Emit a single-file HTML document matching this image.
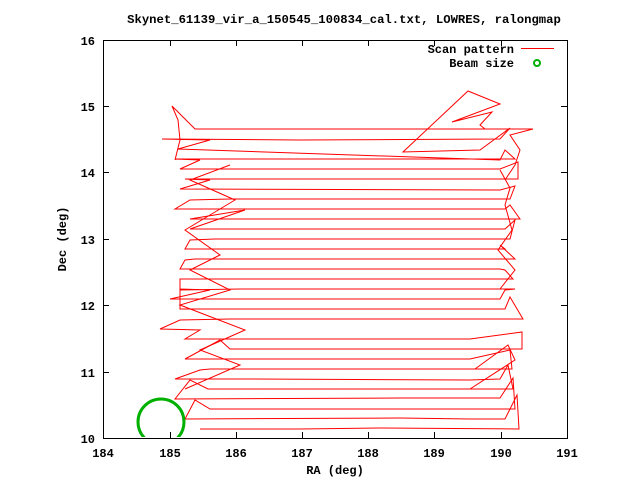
<!DOCTYPE html>
<html><head><style>
html,body{margin:0;padding:0;background:#fff;}
svg{display:block;}
text{font-family:"Liberation Mono","DejaVu Sans Mono",monospace;font-weight:bold;font-size:12px;fill:#000;}
</style></head><body>
<svg width="640" height="480" viewBox="0 0 640 480" xmlns="http://www.w3.org/2000/svg">
<rect width="640" height="480" fill="#fff"/>
<text x="344" y="23" text-anchor="middle" style="font-size:12.25px">Skynet_61139_vir_a_150545_100834_cal.txt, LOWRES, ralongmap</text>
<defs><clipPath id="c"><rect x="103" y="40" width="464" height="397"/></clipPath></defs>
<g stroke="#000" stroke-width="1" fill="none" shape-rendering="crispEdges">
<rect x="103.5" y="40.5" width="464" height="398"/>
<path d="M170.5 438v-6M236.5 438v-6M302.5 438v-6M368.5 438v-6M434.5 438v-6M501.5 438v-6M170.5 40v6M236.5 40v6M302.5 40v6M368.5 40v6M434.5 40v6M501.5 40v6
M103 372.5h6M103 305.5h6M103 239.5h6M103 172.5h6M103 106.5h6M567 372.5h-6M567 305.5h-6M567 239.5h-6M567 172.5h-6M567 106.5h-6"/>
</g>
<g text-anchor="end">
<text x="95" y="443">10</text><text x="95" y="377">11</text><text x="95" y="310">12</text><text x="95" y="244">13</text><text x="95" y="177">14</text><text x="95" y="111">15</text><text x="95" y="45">16</text>
</g>
<g text-anchor="middle">
<text x="103" y="457">184</text><text x="170" y="457">185</text><text x="236" y="457">186</text><text x="302" y="457">187</text><text x="368" y="457">188</text><text x="434" y="457">189</text><text x="501" y="457">190</text><text x="567" y="457">191</text>
<text x="335" y="474">RA (deg)</text>
<text transform="translate(66,239) rotate(-90)">Dec (deg)</text>
</g>
<g clip-path="url(#c)">
<polyline fill="none" stroke="#f00" stroke-width="1" points="
200,429 300,429 380,428 519,429 517,395 505,419 470,419 400,418 185,419 195,400 210,409 515,409 513,378 500,398 460,398 400,398 175,399 190,380 208,389 513,389 508,365 500,379 470,380 250,379 175,379 200,370 210,369 512,369 510,350 470,359 185,359 220,340 230,349 522,349 522,332 470,339 185,339 200,330 160,329 180,320 230,319 523,319 510,297 505,309 180,309 180,290 240,289 515,289 505,290 500,299 170,299 210,290 180,289 180,279 200,279 513,279 505,270 500,269 180,269 185,260 195,259 515,259 500,245 505,249 185,249 190,240 215,239 510,239 515,220 505,229 190,229 245,210 190,219 520,219 510,205 505,209 175,209 190,200 230,199 510,199 515,186 500,190 180,189 210,180 185,179 518,179 518,162 500,169 180,169 200,160 175,159 515,159 505,150 500,160 178,149 210,140 162,139 300,140 500,139 510,128 480,150 403,152 468,91 500,104 452,122 492,112 480,125 485,129 195,129 172,106 178,120 180,140 175,160
"/>
<polyline fill="none" stroke="#f00" stroke-width="1" points="505,180 515,165 520,150 510,135 533,129 195,129"/>
<polyline fill="none" stroke="#f00" stroke-width="1" points="470,389 515,360 508,345 475,369"/>
<polyline fill="none" stroke="#f00" stroke-width="1" points="185,389 240,365 200,350 245,330 180,305 230,290 190,270 220,255 185,230 235,200 190,180 230,165"/>
<polyline fill="none" stroke="#f00" stroke-width="1" points="500,289 515,270 498,250 512,230 505,205 510,188 500,170"/>
<circle cx="161" cy="422" r="23" fill="none" stroke="#00b000" stroke-width="3"/>
</g>
<text x="514" y="53" text-anchor="end">Scan pattern</text>
<line x1="521" y1="48.5" x2="554" y2="48.5" stroke="#f00" stroke-width="1"/>
<text x="514" y="67" text-anchor="end">Beam size</text>
<circle cx="537" cy="63" r="3" fill="none" stroke="#00b000" stroke-width="2"/>
</svg>
</body></html>
